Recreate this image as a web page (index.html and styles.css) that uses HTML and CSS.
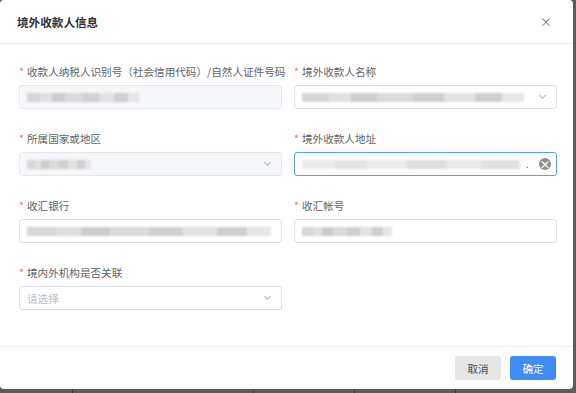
FILE: index.html
```html
<!DOCTYPE html>
<html lang="zh-CN">
<head>
    <meta charset="UTF-8">
    <meta name="viewport" content="width=device-width, initial-scale=1.0">
    <title>境外收款人信息</title>
    <link rel="stylesheet" href="styles.css">
</head>
<body>
    <div class="dialog">
        <div class="dialog-header">
            <span class="dialog-title">境外收款人信息</span>
            <span class="dialog-close">&#215;</span>
        </div>

        <div class="dialog-body">
            <div class="form-item">
                <label><i>*</i>收款人纳税人识别号（社会信用代码）/自然人证件号码</label>
                <div class="input is-disabled">
                    <span class="mask" style="width: 112px"></span>
                </div>
            </div>
            <div class="form-item">
                <label><i>*</i>境外收款人名称</label>
                <div class="input">
                    <span class="mask" style="width: 222px"></span>
                    <span class="arrow"></span>
                </div>
            </div>

            <div class="form-item">
                <label><i>*</i>所属国家或地区</label>
                <div class="input is-disabled">
                    <span class="mask" style="width: 64px"></span>
                    <span class="arrow"></span>
                </div>
            </div>
            <div class="form-item">
                <label><i>*</i>境外收款人地址</label>
                <div class="input is-focus">
                    <span class="mask light" style="width: 218px"></span>
                    <span class="dot">.</span>
                    <span class="clear">&#215;</span>
                </div>
            </div>

            <div class="form-item">
                <label><i>*</i>收汇银行</label>
                <div class="input">
                    <span class="mask" style="width: 244px"></span>
                </div>
            </div>
            <div class="form-item">
                <label><i>*</i>收汇帐号</label>
                <div class="input">
                    <span class="mask" style="width: 90px"></span>
                </div>
            </div>

            <div class="form-item">
                <label><i>*</i>境内外机构是否关联</label>
                <div class="input">
                    <span class="placeholder">请选择</span>
                    <span class="arrow"></span>
                </div>
            </div>
        </div>

        <div class="dialog-footer">
            <button class="btn">取消</button>
            <button class="btn btn-primary">确定</button>
        </div>
    </div>

    <div class="behind">
        <span class="cell" style="width: 72px"></span>
        <span class="cell red" style="width: 180px"></span>
        <span class="cell" style="width: 100px"></span>
        <span class="cell" style="width: 100px"></span>
    </div>
</body>
</html>
```

FILE: styles.css
```css
body {
    font-family: "Noto Sans CJK SC", "Noto Sans", sans-serif;
    background-color: #5c5c5c;
    margin: 0;
    padding: 0;
    height: 393px;
    overflow: hidden;
}

.dialog {
    width: 573px;
    height: 389px;
    background-color: #ffffff;
    border-radius: 4px;
    display: flex;
    flex-direction: column;
    box-sizing: border-box;
}

.dialog-header {
    height: 43px;
    padding: 0 21px 0 17px;
    display: flex;
    align-items: center;
    justify-content: space-between;
    border-bottom: 1px solid #efefef;
}

.dialog-title {
    font-size: 11.6px;
    font-weight: bold;
    color: #303133;
}

.dialog-close {
    font-size: 12px;
    color: #777;
    line-height: 1;
}

.dialog-body {
    flex: 1;
    padding: 20px 16px 0 19px;
    display: grid;
    grid-template-columns: 263px 263px;
    column-gap: 12px;
    align-content: start;
}

.form-item {
    height: 67px;
}

.form-item label {
    display: block;
    font-size: 10.6px;
    line-height: 16px;
    color: #606266;
    margin-bottom: 5px;
    white-space: nowrap;
}

.form-item label i {
    font-style: normal;
    color: #f56c6c;
    margin-right: 3px;
}

.input {
    position: relative;
    height: 24px;
    border: 1px solid #dcdfe6;
    border-radius: 3px;
    box-sizing: border-box;
    display: flex;
    align-items: center;
    padding: 0 7px;
    background-color: #ffffff;
}

.input.is-disabled {
    background-color: #f5f7fa;
    border-color: #e4e7ed;
}

.input.is-focus {
    border-color: #5b9bf0;
}

.mask {
    display: block;
    height: 9px;
    background: linear-gradient(90deg, #d6d6d6 0 12%, #e0e0e0 12% 22%, #cdcdcd 22% 34%, #dadada 34% 50%, #d0d0d0 50% 64%, #e2e2e2 64% 78%, #cfcfcf 78% 90%, #e6e6e6 90%);
    filter: blur(0.8px);
}

.mask.light {
    background: linear-gradient(90deg, #ececec 0 15%, #e2e2e2 15% 30%, #eaeaea 30% 48%, #dedede 48% 66%, #e8e8e8 66% 82%, #e0e0e0 82%);
}

.dot {
    font-size: 10px;
    color: #666;
    margin-left: 6px;
    line-height: 1;
}

.placeholder {
    font-size: 10.6px;
    color: #b8bcc4;
}

.arrow {
    position: absolute;
    right: 11px;
    top: 7px;
    width: 4px;
    height: 4px;
    border-right: 1px solid #b0b4bc;
    border-bottom: 1px solid #b0b4bc;
    transform: rotate(45deg);
}

.clear {
    position: absolute;
    right: 5px;
    top: 5px;
    width: 12px;
    height: 12px;
    border-radius: 50%;
    background-color: #8e8e8e;
    color: #ffffff;
    font-size: 11px;
    font-weight: bold;
    line-height: 12px;
    text-align: center;
}

.dialog-footer {
    height: 43px;
    border-top: 1px solid #efefef;
    display: flex;
    justify-content: flex-end;
    align-items: flex-start;
    gap: 9px;
    padding: 9px 17px 0 0;
    box-sizing: border-box;
}

.btn {
    width: 46px;
    height: 24px;
    border: none;
    border-radius: 3px;
    background-color: #e6e6e6;
    color: #4a4a4a;
    font-family: inherit;
    font-size: 10.6px;
    padding: 0;
    cursor: pointer;
}

.btn-primary {
    background-color: #3f8cf5;
    color: #ffffff;
}

.behind {
    height: 4px;
    display: flex;
}

.behind .cell {
    height: 4px;
    border-right: 1px solid #3a3a3a;
}

.behind .cell.red {
    border-right-color: #7a2a2a;
}
```
